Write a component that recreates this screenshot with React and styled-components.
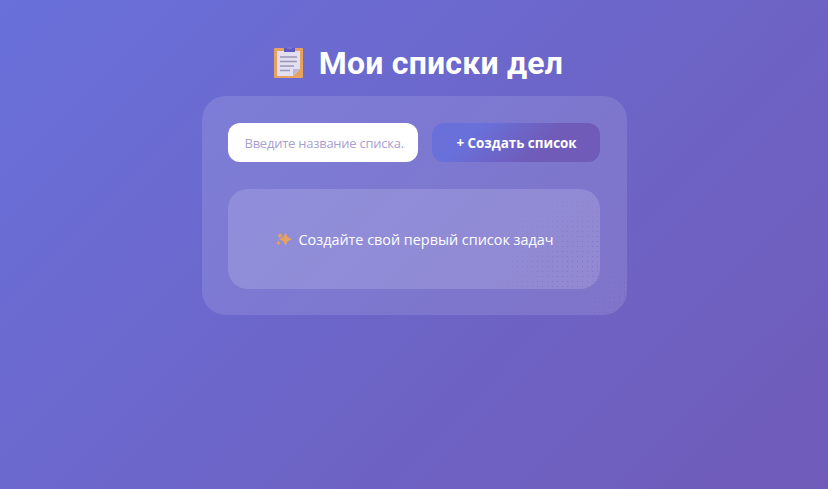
import styled, { createGlobalStyle, css } from "styled-components";

const GlobalStyle = createGlobalStyle`
  * {
    box-sizing: border-box;
  }
  html, body {
    margin: 0;
    padding: 0;
  }
  body {
    font-family: "Open Sans", "Noto Sans", sans-serif;
    min-height: 100vh;
    background: linear-gradient(135deg, #6970da 0%, #705bb8 100%);
  }
`;

// grainy patch that sits in the bottom right corner of the glass panels
const cornerDots = css`
  &::after {
    content: "";
    position: absolute;
    right: 0;
    bottom: 0;
    width: ${(p) => p.$dots}px;
    height: ${(p) => p.$dots}px;
    background-image: radial-gradient(rgba(95, 75, 175, 0.3) 0.5px, transparent 0.8px);
    background-size: 5px 5px;
    mask-image: radial-gradient(circle at 100% 100%, #000 30%, transparent 72%);
    pointer-events: none;
  }
`;

const Page = styled.div`
  min-height: 100vh;
  display: flex;
  flex-direction: column;
  align-items: center;
  padding-top: 40px;
`;

const Title = styled.h1`
  margin: 0 0 11px;
  padding-left: 9px;
  height: 45px;
  display: flex;
  align-items: center;
  gap: 16px;
  color: #fff;
  font-family: Roboto, "Open Sans", sans-serif;
  font-size: 32px;
  font-weight: 700;
  letter-spacing: 0.2px;
`;

const Card = styled.div`
  position: relative;
  overflow: hidden;
  width: 425px;
  height: 219px;
  padding: 27px 27px 26px 26px;
  border-radius: 24px;
  background: rgba(255, 255, 255, 0.12);
  ${cornerDots}
`;

const Form = styled.form`
  display: flex;
  gap: 14px;
  margin-bottom: 27px;
`;

const Input = styled.input`
  width: 190px;
  height: 39px;
  padding: 0 13px 0 17px;
  border: none;
  border-radius: 12px;
  outline: none;
  background: #fff;
  color: #333;
  font-family: inherit;
  font-size: 13px;
  letter-spacing: -0.25px;
  &::placeholder {
    color: #a99fd0;
    opacity: 1;
  }
`;

const Button = styled.button`
  width: 168px;
  height: 39px;
  padding: 0 0 0 2px;
  border: none;
  border-radius: 12px;
  background: linear-gradient(135deg, #6970da 25%, #705bb8 65%);
  color: #fff;
  font-family: inherit;
  font-size: 13.4px;
  font-weight: 700;
`;

const Empty = styled.div`
  position: relative;
  overflow: hidden;
  height: 100px;
  padding-left: 3px;
  display: flex;
  align-items: center;
  justify-content: center;
  gap: 6px;
  border-radius: 20px;
  background: rgba(255, 255, 255, 0.15);
  color: #fff;
  font-size: 14.4px;
  ${cornerDots}
`;

const ClipboardIcon = () => (
  <svg width="29" height="32" viewBox="0 0 29 32" aria-hidden="true">
    <rect x="0" y="1" width="29" height="30" rx="1" fill="#e8a25f" />
    <path d="M3 4h23v18l-7 7H3z" fill="#e1dff0" />
    <path d="M19 29l7-7h-7z" fill="#bdb8d6" />
    <rect x="10" y="1" width="11" height="4" fill="#6058c0" />
    <rect x="13" y="0" width="5" height="2" fill="#7d74d2" />
    <path d="M6 10h17M6 14.500h17M6 19h14M6 23.500h10" stroke="#9a97b8" strokeWidth="1.500" />
  </svg>
);

const SparkleIcon = () => (
  <svg width="16" height="16" viewBox="0 0 16 16" aria-hidden="true">
    <path d="M9.500 1.500l2 4.500 4.500 2.200-4.500 2-2 4.800-2-4.800-4.500-2 4.500-2.200z" fill="#e8a25f" />
    <path d="M4 1.500l1 2.200 2 1-2 1-1 2-1-2-2-1 2-1z" fill="#e8a25f" />
    <path d="M2.500 9.500l.8 1.700 1.700.8-1.700.8-.8 1.700-.8-1.700L0 12l1.700-.8z" fill="#e8a25f" />
  </svg>
);

export default function App() {
  return (
    <>
      <GlobalStyle />
      <Page>
        <Title>
          <ClipboardIcon />
          Мои списки дел
        </Title>
        <Card $dots={50}>
          <Form onSubmit={(e) => e.preventDefault()}>
            <Input placeholder="Введите название списка..." />
            <Button type="submit">+ Создать список</Button>
          </Form>
          <Empty $dots={110}>
            <SparkleIcon />
            Создайте свой первый список задач
          </Empty>
        </Card>
      </Page>
    </>
  );
}
